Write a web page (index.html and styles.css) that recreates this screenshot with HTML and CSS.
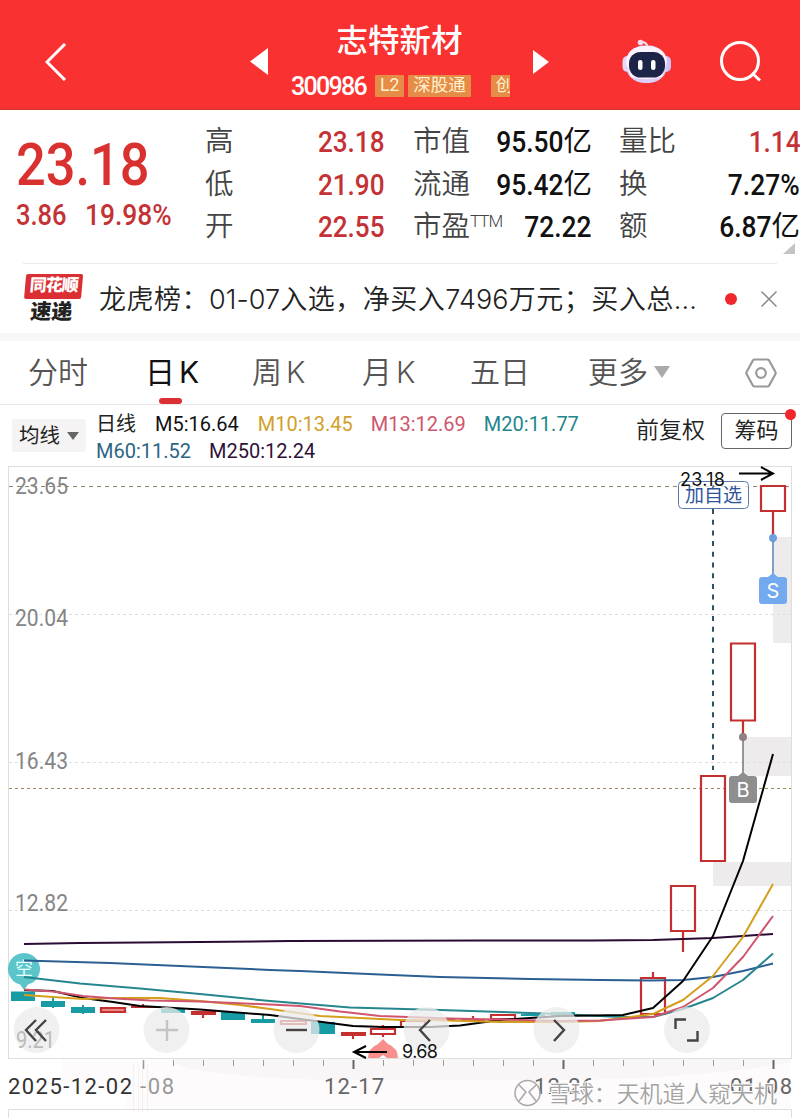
FILE: index.html
```
<!DOCTYPE html>
<html lang="zh-CN">
<head>
    <meta charset="UTF-8">
    <meta name="viewport" content="width=device-width, initial-scale=1.0">
    <title>志特新材 300986</title>
    <link rel="stylesheet" href="styles.css">
</head>
<body>
    <!-- Title bar -->
    <header class="topbar">
        <svg class="back" width="22" height="38" viewBox="0 0 22 38"><path d="M20 1 L2 19 L20 37"/></svg>
        <svg class="prev" width="18" height="27" viewBox="0 0 18 27"><path d="M18 0 V27 L0 13.5 Z"/></svg>
        <div class="stock">
            <h1>志特新材</h1>
            <div class="stock-code">
                <span class="code">300986</span>
                <span class="tag">L2</span>
                <span class="tag">深股通</span>
                <span class="tag tag-cut">创</span>
            </div>
        </div>
        <svg class="next" width="16" height="24" viewBox="0 0 16 24"><path d="M0 0 V24 L16 12 Z"/></svg>
        <svg class="robot" width="50" height="46" viewBox="0 0 50 46">
            <path d="M19 3 Q25 3 25.500 8" fill="none" stroke="#f3dcf5" stroke-width="2"/>
            <circle cx="18.500" cy="3.500" r="2.800" fill="#f9d9ea"/>
            <rect x="0.500" y="17" width="10" height="16" rx="5" fill="#e3d8fa"/>
            <rect x="39" y="17" width="10" height="16" rx="5" fill="#cfc3f6"/>
            <rect x="3.500" y="6.500" width="42" height="37.500" rx="18.500" fill="#dcd0fa"/>
            <path d="M4 25 Q4 7 24 7 Q42 7 45 21 L40 38 Q24 42 9 38 Z" fill="#fbf3fd"/>
            <rect x="7" y="13" width="36" height="25.500" rx="11.500" fill="#1c2547"/>
            <rect x="16" y="21" width="4.500" height="10" rx="2.200" fill="#fff"/>
            <rect x="29" y="21" width="4.500" height="10" rx="2.200" fill="#fff"/>
        </svg>
        <svg class="search" width="42" height="42" viewBox="0 0 42 42"><circle cx="20" cy="20" r="18.500"/><path d="M32 32 L40 39.500"/></svg>
    </header>

    <!-- Quote -->
    <section class="quote">
        <div class="price">
            <div class="price-now"><span class="num">23.18</span></div>
            <div class="price-change"><span class="num">3.86</span><span class="num">19.98%</span></div>
        </div>
        <dl class="stats">
            <dt>高</dt><dd class="up"><span class="num">23.18</span></dd>
            <dt>市值</dt><dd><span class="num">95.50</span>亿</dd>
            <dt>量比</dt><dd class="up"><span class="num">1.14</span></dd>
            <dt>低</dt><dd class="up"><span class="num">21.90</span></dd>
            <dt>流通</dt><dd><span class="num">95.42</span>亿</dd>
            <dt>换</dt><dd><span class="num">7.27%</span></dd>
            <dt>开</dt><dd class="up"><span class="num">22.55</span></dd>
            <dt>市盈<sup>TTM</sup></dt><dd><span class="num">72.22</span></dd>
            <dt>额</dt><dd><span class="num">6.87</span>亿</dd>
        </dl>
        <i class="corner"></i>
    </section>

    <!-- News line -->
    <section class="news">
        <div class="news-logo"><b>同花顺</b><em>速递</em></div>
        <p>龙虎榜：<span>01-07</span>入选，净买入<span>7496</span>万元；买入总<span>...</span></p>
        <i class="dot"></i>
        <svg width="16" height="16" viewBox="0 0 16 16"><path d="M0.500 0.500 L15.500 15.500 M15.500 0.500 L0.500 15.500"/></svg>
    </section>

    <nav class="tabs">
        <a>分时</a>
        <a class="active">日<span>K</span></a>
        <a>周<span>K</span></a>
        <a>月<span>K</span></a>
        <a>五日</a>
        <a class="more">更多<i></i></a>
        <svg class="settings" width="32" height="30" viewBox="0 0 32 30"><path d="M9.500 1.500 H22.500 Q23.500 1.500 24 2.300 L30.300 13.800 Q31 15 30.300 16.200 L24 27.700 Q23.500 28.500 22.500 28.500 H9.500 Q8.500 28.500 8 27.700 L1.700 16.200 Q1 15 1.700 13.800 L8 2.300 Q8.500 1.500 9.500 1.500 Z"/><circle cx="16" cy="15" r="4.800"/></svg>
    </nav>

    <!-- Moving averages -->
    <section class="averages">
        <button class="ma-select">均线<i></i></button>
        <div class="ma-list">
            <span class="period">日线</span>
            <span class="m5">M5:16.64</span>
            <span class="m10">M10:13.45</span>
            <span class="m13">M13:12.69</span>
            <span class="m20">M20:11.77</span>
            <span class="m60">M60:11.52</span>
            <span class="m250">M250:12.24</span>
        </div>
        <span class="adjust">前复权</span>
        <button class="chips">筹码<i class="badge"></i></button>
    </section>

    <svg class="chart" width="800" height="658" viewBox="0 460 800 658">
        <!-- axis strip -->
        <path d="M62 1059 H791 V1109 H125 V1090 H62 Z" fill="#fdfbfc"/>
        <path d="M175 1059 H791 V1062 Q700 1079 560 1080 H330 Q215 1078 175 1064 Z" fill="#f8f6f7"/>
        <path d="M133.500 1064 V1112 M138.500 1064 V1112 M142.500 1064 V1112 M147.500 1064 V1112" stroke="#f3f0f1"/>
        <!-- price gaps -->
        <g fill="#eeebed">
            <rect x="773" y="537" width="18" height="106"/>
            <rect x="743" y="737" width="48" height="39"/>
            <rect x="713" y="862" width="78" height="24"/>
        </g>
        <g class="frame">
            <rect x="8.500" y="466.500" width="783" height="592"/>
            <path d="M8.500 1118 V1109.500 H791.500 V1118"/>
        </g>
        <g class="grid">
            <path d="M9 614.500 H791 M9 762.500 H791 M9 910.500 H791"/>
            <path class="grid-top" d="M9 486.500 H791"/>
            <path class="grid-cost" d="M9 788.500 H791"/>
        </g>
        <g class="ticks">
            <path d="M173.500 1060 V1066 M203.500 1060 V1066 M233.500 1060 V1066 M263.500 1060 V1066 M293.500 1060 V1066 M323.500 1060 V1066 M383.500 1060 V1066 M413.500 1060 V1066 M443.500 1060 V1066 M473.500 1060 V1066 M503.500 1060 V1066 M533.500 1060 V1066 M593.500 1060 V1066 M623.500 1060 V1066 M653.500 1060 V1066 M683.500 1060 V1066 M713.500 1060 V1066 M743.500 1060 V1066"/>
            <path d="M143.500 1060 V1069" stroke-width="1.500"/>
            <path d="M353.500 1060 V1069 M563.500 1060 V1069 M773.500 1060 V1069" stroke="#666" stroke-width="2"/>
        </g>
        <g class="axis">
            <text x="15" y="494" textLength="53" lengthAdjust="spacingAndGlyphs">23.65</text>
            <text x="15" y="626" textLength="53" lengthAdjust="spacingAndGlyphs">20.04</text>
            <text x="15" y="769" textLength="53" lengthAdjust="spacingAndGlyphs">16.43</text>
            <text x="15" y="911" textLength="53" lengthAdjust="spacingAndGlyphs">12.82</text>
        </g>

        <!-- candles -->
        <g class="down">
            <path d="M11 991.500 h24 v9.500 h-24 z M41 1001 h24 v6 h-24 z M71 1007 h24 v6 h-24 z M161 1009 h24 v4 h-24 z M221 1012 h24 v8 h-24 z M251 1019 h24 v4 h-24 z M311 1022 h24 v12 h-24 z M521 1014 h24 v2 h-24 z M551 1012 h24 v5 h-24 z"/>
            <path d="M52 998 h2 v10 h-2 z M82 1005 h2 v9 h-2 z M262 1015 h2 v8 h-2 z"/>
        </g>
        <g class="rise">
            <path d="M101 1008 h24 v4 h-24 z" fill="#ee8a86"/>
            <path d="M131 1007 h25 M143 1004 v4 M191 1012 h25 M191 1014 h25 M203 1014 v4 M281 1021 h25 v3 h-25 z M341 1033 h25 M341 1035 h25 M353 1035 v4"/>
            <path d="M371 1029 h24 v5 h-24 z M383 1025 v4 M383 1034 v3 M401 1021 h24 v6 h-24 z M431 1019 h24 M461 1020 h24 M473 1016 v5 M491 1015 h24 v4 h-24 z"/>
            <path d="M641 978 h24 v36 h-24 z M653 972 v6 M671 886 h24 v45 h-24 z M683 931 v21"/>
            <path d="M701 776 h24 v85 h-24 z M731 643.500 h24 v77 h-24 z M743 720 v16 M761 486 h24 v25 h-24 z M773 511 v26"/>
        </g>

        <path d="M24 990 L20 984.500 A16 16 0 1 1 28 984.500 Z" fill="#4dc0c6" fill-opacity=".92"/>
        <text class="short" x="24" y="975">空</text>

        <!-- average lines -->
        <g class="lines">
            <polyline stroke="#2a0b33" points="24,944 80,943 200,942 290,941 480,940.500 593,940.500 653,940 683,939 713,938 743,936 773,934"/>
            <polyline stroke="#2b5f92" points="24,960.500 110,963 203,967 270,970 300,971 380,974.500 440,977 530,979 600,980 650,980.500 683,980 713,977 743,971 773,963.500"/>
            <polyline stroke="#27868d" points="24,977 80,983.500 140,988.500 200,994 270,1001 350,1007.500 440,1010 530,1013 560,1014 620,1017 653,1017 683,1009 713,998 743,980 773,953.500"/>
            <polyline stroke="#000" points="24,990 53,991 83,998 113,1002 140,1006 200,1009.500 270,1015 300,1019 330,1023 353,1026 383,1027 430,1027 460,1025.500 500,1020 530,1018 560,1016 623,1015 653,1008 683,981 713,936 743,861 773,754"/>
            <polyline stroke="#d59f1d" points="24,995 53,997 83,999 113,998 160,998 200,1001 240,1005 270,1009 320,1016 400,1020 430,1020 500,1022 560,1022 600,1021 653,1014 683,1000 713,976 743,937 773,884"/>
            <polyline stroke="#d0566f" points="24,989.500 53,991.500 83,996 115,998.500 150,1000.500 200,1001.500 270,1004.500 300,1006 340,1011.500 380,1016 450,1018.500 560,1021 600,1020.500 653,1017 683,1007 713,988 743,957 773,916"/>
        </g>

        <!-- markers -->
        <path d="M713 509 V770" stroke="#2f5264" stroke-width="2" stroke-dasharray="5 5.700"/>
        <rect x="678.500" y="481.500" width="70" height="27" rx="4" fill="#fff" fill-opacity=".7" stroke="#5b7bab"/>
        <text class="watch" x="713.500" y="502">加自选</text>
        <text class="high" x="680" y="486" textLength="45">23.18</text>
        <path class="arrow" d="M739 473.500 H772 M761 467 L773 473.500 L761 480"/>

        <circle cx="773" cy="538" r="4" fill="#6f9fe2"/>
        <path d="M773 541 V575" stroke="#5585b8" stroke-width="1.500"/>
        <path d="M762 577 H768 L773 573 L778 577 H784 Q787 577 787 580 V601 Q787 604 784 604 H762 Q759 604 759 601 V580 Q759 577 762 577 Z" fill="#73a9ee"/>
        <text class="mark" x="773" y="598">S</text>
        <circle cx="743" cy="737" r="4" fill="#8f8085"/>
        <path d="M743 740 V775" stroke="#777" stroke-width="1.500"/>
        <path d="M732 776 H738 L743 772 L748 776 H754 Q757 776 757 779 V800 Q757 803 754 803 H732 Q729 803 729 800 V779 Q729 776 732 776 Z" fill="#8e8e8e"/>
        <text class="mark" x="743" y="797">B</text>

        <path d="M368 1058 Q368 1048 378 1044 L383 1039 L388 1044 Q398 1048 398 1058 H387 L383 1055 L379 1058 Z" fill="#f98f8c"/>
        <path class="arrow" d="M387 1052 H355 M366 1046 L354 1052 L366 1058"/>

        <!-- dates -->
        <g class="dates">
            <text x="140" y="1094" textLength="34" fill="#999">-08</text>
            <text x="8" y="1094" textLength="124" fill="#333">2025-12-02</text>
            <text x="324" y="1094" textLength="60">12-17</text>
            <text x="534" y="1094" textLength="60">12-26</text>
            <text x="730" y="1094" textLength="62">01-08</text>
        </g>

        <!-- floating controls -->
        <g class="controls">
            <circle cx="36.500" cy="1030" r="23"/><circle cx="166.500" cy="1030" r="23"/><circle cx="296.500" cy="1030" r="23"/>
            <circle cx="426.500" cy="1030" r="23"/><circle cx="556.500" cy="1030" r="23"/><circle cx="687" cy="1030" r="23"/>
            <text x="16" y="1048" textLength="39" lengthAdjust="spacingAndGlyphs">9.21</text>
            <path d="M36 1020 L26 1030 L36 1041 M46 1020 L36 1030 L46 1041"/>
            <path class="disabled" d="M156 1030 H178 M167 1020 V1041"/>
            <path d="M286 1030 H307"/>
            <path d="M430 1020 L420 1030 L430 1041"/>
            <path d="M554 1020 L564 1030 L554 1041"/>
            <path d="M675.500 1029 V1019.500 H686 M697.500 1031 V1040.500 H687"/>
        </g>
        <text class="low" x="402" y="1058" textLength="36">9.68</text>

        <g class="watermark">
            <circle cx="527.500" cy="1093" r="12.500"/>
            <path d="M519 1085 L526 1092 L519 1101 M536 1085 L529 1092 L536 1101"/>
            <text x="548" y="1102" textLength="229">雪球：天机道人窥天机</text>
        </g>
    </svg>
</body>
</html>
```

FILE: styles.css
```
* {
    box-sizing: border-box;
}

body {
    margin: 0;
    width: 800px;
    height: 1118px;
    overflow: hidden;
    background: #fff;
    color: #222;
    font-family: Roboto, "Noto Sans CJK SC", sans-serif;
}

h1, p, dl, dd {
    margin: 0;
}

svg {
    display: block;
    fill: none;
}

button {
    font-family: inherit;
    padding: 0;
    color: #222;
}

.num {
    display: inline-block;
    transform: scaleX(.88);
    transform-origin: right;
    font-weight: 500;
}

/* title bar */
.topbar {
    display: grid;
    grid-template-columns: 205px 18px 265px 16px 73px 50px 48px 42px;
    align-items: center;
    height: 110px;
    padding: 14px 0 0 45px;
    background: #fa3131;
    border-bottom: 1px solid #c33;
}

.back, .search {
    stroke: #fff;
    stroke-width: 3;
}

.prev, .next {
    fill: #fff;
}

.robot {
    grid-column: 6;
}

.search {
    grid-column: 8;
}

.stock {
    display: flex;
    flex-direction: column;
    align-items: center;
    color: #fff;
}

.stock h1 {
    margin: -4px 2px 0 0;
    font-size: 31.500px;
    line-height: 44px;
    font-weight: 500;
}

.stock-code {
    display: flex;
    align-items: center;
    width: 219px;
    height: 26px;
    margin-top: 9px;
    overflow: hidden;
}

.code {
    flex: none;
    width: 84px;
    font-size: 25px;
    font-weight: 500;
    letter-spacing: -1.700px;
}

.tag {
    flex: none;
    height: 22px;
    margin-right: 4px;
    padding: 0 5px;
    background: #e58c46;
    border-radius: 1px;
    color: #fff2d0;
    font-size: 17.500px;
    line-height: 21px;
}

.tag-cut {
    margin-left: 16px;
    margin-right: 0;
}

/* quote */
.quote {
    position: relative;
    display: flex;
    height: 153px;
    padding-top: 11px;
}

.price {
    width: 205px;
    padding: 9px 0 0 16px;
    color: #d93030;
}

.price .num {
    transform-origin: left;
}

.price-now {
    font-size: 59.500px;
    line-height: 70px;
}

.price-change {
    display: flex;
    gap: 12px;
    color: #c43236;
    font-size: 29px;
    line-height: 30px;
}

.price-change .num + .num {
    transform: scaleX(.91);
    margin-left: -1px;
}

.stats {
    display: grid;
    grid-template-columns: 92px 88px 28px 92px 87px 27px 90px 91px;
    grid-auto-rows: 42.500px;
    align-items: center;
    font-size: 28.500px;
    line-height: 42px;
    white-space: nowrap;
}

.stats dt {
    color: #444;
    font-weight: 350;
}

.stats dt:nth-of-type(3n+2) {
    grid-column: 4;
}

.stats dt:nth-of-type(3n) {
    grid-column: 7;
}

.stats dd {
    display: flex;
    justify-content: flex-end;
    color: #111;
}

.stats dd .num {
    font-size: 30px;
}

.stats .up {
    color: #c43236;
}

.stats .up .num {
    transform: scaleX(.87);
}

.stats sup {
    font-size: 17px;
    font-weight: 300;
    line-height: 0;
    vertical-align: 9px;
    letter-spacing: -1px;
}

.corner {
    position: absolute;
    right: 5px;
    bottom: 9px;
    border-left: 12px solid transparent;
    border-bottom: 11px solid #c4c4c4;
}

/* news */
.news {
    display: flex;
    align-items: center;
    height: 70px;
    margin: 0 23px;
    border-top: 1px solid #eaeaea;
}

.news-logo {
    flex: none;
    width: 57px;
    height: 50px;
    margin: 0 18px 0 1px;
    text-align: center;
    transform: skewX(-5deg);
    line-height: 23px;
}

.news-logo b {
    display: block;
    height: 25px;
    background: #db2f34;
    border-radius: 2px;
    color: #fff;
    font-size: 17px;
    font-weight: 900;
    letter-spacing: -1px;
}

.news-logo em {
    font-style: normal;
    font-size: 21px;
    font-weight: 900;
    line-height: 26px;
}

.news p {
    flex: none;
    width: 603px;
    margin-top: -3px;
    font-size: 27px;
    font-weight: 350;
    letter-spacing: .500px;
    white-space: nowrap;
}

.news p span {
    font-family: Inter, sans-serif;
    font-size: 27px;
    letter-spacing: .100px;
}

.news svg {
    margin-left: auto;
    stroke: #888;
    stroke-width: 1.500;
}

.dot {
    flex: none;
    width: 12px;
    height: 12px;
    margin-left: 23px;
    border-radius: 50%;
    background: #f0282d;
}

/* tabs */
.tabs {
    display: grid;
    grid-template-columns: 117px 107px 110px 108px 118px 157px 32px;
    align-items: center;
    height: 72px;
    padding-left: 28px;
    border-top: 8px solid #f7f7f7;
    border-bottom: 1px solid #e8e8e8;
    color: #555;
    font-size: 30px;
    font-weight: 350;
    white-space: nowrap;
}

.tabs a {
    position: relative;
    line-height: 62px;
}

.tabs span {
    margin-left: 4px;
    font-family: Inter, sans-serif;
}

.tabs .active {
    color: #111;
    font-weight: 400;
}

.tabs .active::after {
    content: "";
    position: absolute;
    left: 14px;
    bottom: 0;
    width: 23px;
    height: 6px;
    border-radius: 3px;
    background: #db3034;
}

.more i {
    display: inline-block;
    margin-left: 6px;
    vertical-align: 5px;
    border: 8px solid transparent;
    border-top: 12px solid #aaa;
    border-bottom: 0;
}

.settings {
    stroke: #999;
    stroke-width: 2.200;
}

/* averages */
.averages {
    display: flex;
    align-items: flex-start;
    height: 55px;
    padding: 6px 8px 0 12px;
}

.ma-select {
    width: 74px;
    height: 33px;
    margin: 8px 10px 0 0;
    border: 0;
    border-radius: 3px;
    background: #f5f3f4;
    font-size: 20.500px;
    line-height: 30px;
}

.ma-select i {
    display: inline-block;
    margin-left: 7px;
    vertical-align: 3px;
    border: 6px solid transparent;
    border-top: 8px solid #666;
    border-bottom: 0;
}

.ma-list {
    display: flex;
    flex-wrap: wrap;
    width: 540px;
    gap: 0 18px;
    font-size: 20px;
    line-height: 27px;
}

.period { margin-right: 1px; }
.m5 { color: #111; margin-right: 1px; }
.m10 { color: #d3a02a; }
.m13 { color: #cf566c; }
.m20 { color: #23868c; }
.m60 { color: #2b6586; }
.m250 { color: #2f1238; }

.adjust {
    width: 85px;
    font-size: 23px;
    line-height: 40px;
    font-weight: 350;
}

.chips {
    position: relative;
    width: 71px;
    height: 36px;
    margin-top: 2px;
    border: 1px solid #666;
    border-radius: 4px;
    background: #fff;
    font-size: 22px;
    line-height: 32px;
}

.badge {
    position: absolute;
    top: -5px;
    right: -5px;
    width: 11px;
    height: 11px;
    border-radius: 50%;
    background: #f0282d;
}

/* chart */
.frame {
    stroke: #dedede;
}

.grid {
    stroke: #dedede;
    stroke-dasharray: 3 3;
}

.grid-top {
    stroke: #918a75;
    stroke-dasharray: 4 4;
}

.grid-cost {
    stroke: #9a8a5c;
}

.ticks {
    stroke: #999;
}

.axis {
    fill: #858585;
    font-size: 23px;
}

.down {
    fill: #179ba5;
}

.rise {
    stroke: #c4302f;
    stroke-width: 2.200;
}

.lines {
    stroke-width: 2;
    stroke-linejoin: round;
}

.watch {
    fill: #30549b;
    font-size: 19px;
    text-anchor: middle;
}

.high, .low {
    fill: #111;
    font-family: Inter, sans-serif;
    font-size: 18px;
}

.arrow {
    stroke: #000;
    stroke-width: 2;
}

.mark {
    fill: #fff;
    font-family: Inter, sans-serif;
    font-size: 20px;
    text-anchor: middle;
}

.short {
    fill: #e6ffff;
    font-size: 18px;
    text-anchor: middle;
}

.dates {
    fill: #666;
    font-size: 22px;
}

.controls circle {
    fill: #ebebeb;
    fill-opacity: .75;
}

.controls text {
    fill: #bbb;
    font-size: 23px;
}

.controls path {
    stroke: #444;
    stroke-width: 2.400;
}

.controls .disabled {
    stroke: #c4c4c4;
}

.watermark {
    stroke: #a8a8a8;
    stroke-width: 1.500;
}

.watermark text {
    fill: #a4a4a4;
    stroke: #fff;
    stroke-width: 2;
    paint-order: stroke;
    font-size: 23px;
    font-weight: 350;
}
```
